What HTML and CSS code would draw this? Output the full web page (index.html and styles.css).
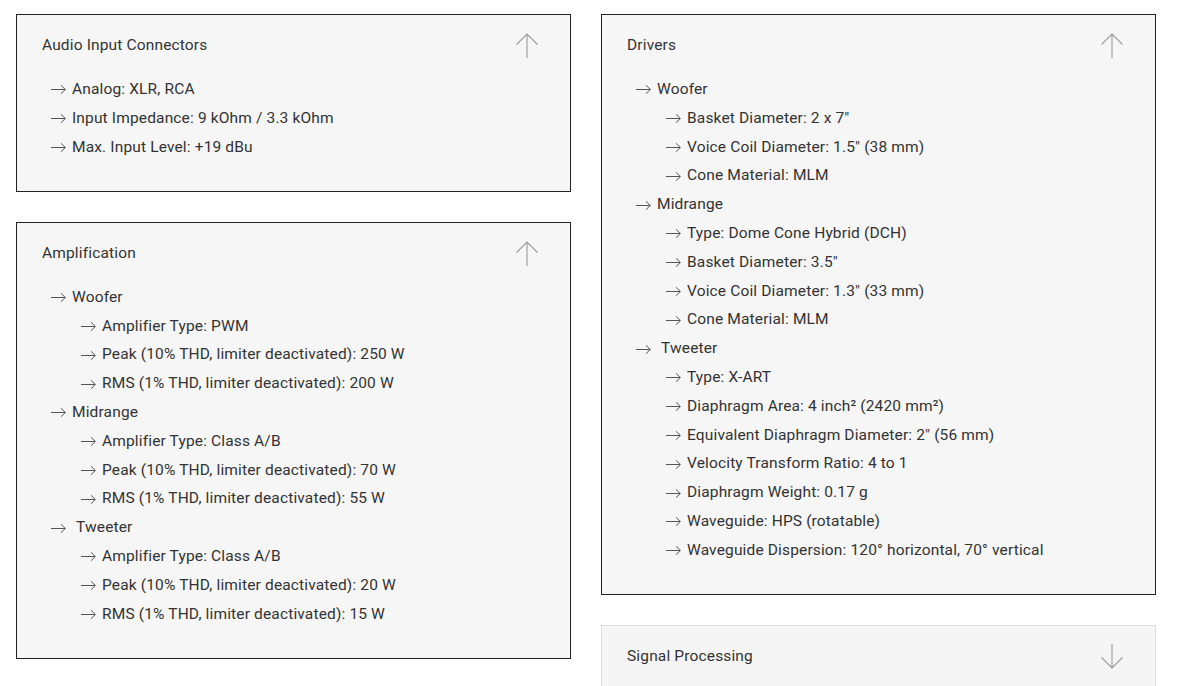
FILE: index.html
```html
<!DOCTYPE html>
<html lang="en">
<head>
<meta charset="utf-8">
<title>Specifications</title>
<link rel="stylesheet" href="styles.css">
</head>
<body>
<div class="grid">
  <div class="col">
    <section class="box open">
      <div class="head">
        <span class="title">Audio Input Connectors</span>
        <svg class="toggle" width="24" height="25" viewBox="0 0 24 25"><path d="M12 1V25M1.5 11.5L12 1L22.5 11.5" fill="none" stroke="#9a9a9a" stroke-width="1.1"/></svg>
      </div>
      <ul class="list">
        <li>Analog: XLR, RCA</li>
        <li>Input Impedance: 9 kOhm / 3.3 kOhm</li>
        <li>Max. Input Level: +19 dBu</li>
      </ul>
    </section>
    <section class="box open">
      <div class="head">
        <span class="title">Amplification</span>
        <svg class="toggle" width="24" height="25" viewBox="0 0 24 25"><path d="M12 1V25M1.5 11.5L12 1L22.5 11.5" fill="none" stroke="#9a9a9a" stroke-width="1.1"/></svg>
      </div>
      <ul class="list">
        <li>Woofer
          <ul>
            <li>Amplifier Type: PWM</li>
            <li>Peak (10% THD, limiter deactivated): 250 W</li>
            <li>RMS (1% THD, limiter deactivated): 200 W</li>
          </ul>
        </li>
        <li>Midrange
          <ul>
            <li>Amplifier Type: Class A/B</li>
            <li>Peak (10% THD, limiter deactivated): 70 W</li>
            <li>RMS (1% THD, limiter deactivated): 55 W</li>
          </ul>
        </li>
        <li>&nbsp;Tweeter
          <ul>
            <li>Amplifier Type: Class A/B</li>
            <li>Peak (10% THD, limiter deactivated): 20 W</li>
            <li>RMS (1% THD, limiter deactivated): 15 W</li>
          </ul>
        </li>
      </ul>
    </section>
  </div>
  <div class="col">
    <section class="box open">
      <div class="head">
        <span class="title">Drivers</span>
        <svg class="toggle" width="24" height="25" viewBox="0 0 24 25"><path d="M12 1V25M1.5 11.5L12 1L22.5 11.5" fill="none" stroke="#9a9a9a" stroke-width="1.1"/></svg>
      </div>
      <ul class="list">
        <li>Woofer
          <ul>
            <li>Basket Diameter: 2 x 7″</li>
            <li>Voice Coil Diameter: 1.5″ (38 mm)</li>
            <li>Cone Material: MLM</li>
          </ul>
        </li>
        <li>Midrange
          <ul>
            <li>Type: Dome Cone Hybrid (DCH)</li>
            <li>Basket Diameter: 3.5″</li>
            <li>Voice Coil Diameter: 1.3″ (33 mm)</li>
            <li>Cone Material: MLM</li>
          </ul>
        </li>
        <li>&nbsp;Tweeter
          <ul>
            <li>Type: X-ART</li>
            <li>Diaphragm Area: 4 inch² (2420 mm²)</li>
            <li>Equivalent Diaphragm Diameter: 2″ (56 mm)</li>
            <li>Velocity Transform Ratio: 4 to 1</li>
            <li>Diaphragm Weight: 0.17 g</li>
            <li>Waveguide: HPS (rotatable)</li>
            <li>Waveguide Dispersion: 120° horizontal, 70° vertical</li>
          </ul>
        </li>
      </ul>
    </section>
    <section class="box closed">
      <div class="head">
        <span class="title">Signal Processing</span>
        <svg class="toggle" width="24" height="25" viewBox="0 0 24 25"><path d="M12 0V24M1.5 13.5L12 24L22.5 13.5" fill="none" stroke="#9a9a9a" stroke-width="1.1"/></svg>
      </div>
    </section>
  </div>
</div>
</body>
</html>
```
FILE: styles.css
```css
html, body {
  margin: 0;
  padding: 0;
  background: #ffffff;
}
body {
  font-family: Roboto, "Liberation Sans", sans-serif;
  font-size: 15.5px;
  letter-spacing: 0.15px;
  color: #333333;
  overflow: hidden;
}
.grid {
  display: grid;
  grid-template-columns: 555px 555px;
  column-gap: 30px;
  padding: 14px 16px 0;
  align-items: start;
}
.col {
  display: flex;
  flex-direction: column;
  gap: 30px;
}
.box {
  background: #f6f6f6;
  border: 1px solid #222222;
  padding: 16px 25px 29.5px;
}
.box.closed {
  border-color: #dddddd;
  background: #f5f5f5;
  padding-bottom: 40px;
}
.head {
  display: flex;
  justify-content: space-between;
  align-items: center;
  height: 29px;
  line-height: 29px;
}
.toggle {
  display: block;
  margin-right: 6px;
  margin-top: 0;
}
.list {
  list-style: none;
  margin: 15px 0 0;
  padding: 0 0 0 9px;
  line-height: 28.8px;
}
.list ul {
  list-style: none;
  margin: 0;
  padding: 0 0 0 30px;
}
.list li::before {
  content: "";
  display: inline-block;
  width: 15px;
  height: 9px;
  margin-right: 6px;
  vertical-align: middle;
  background: url("data:image/svg+xml;utf8,<svg xmlns='http://www.w3.org/2000/svg' width='15' height='9' viewBox='0 0 15 9'><path d='M0 4.5H14.3M10 0.3L14.3 4.5L10 8.7' fill='none' stroke='%23555' stroke-width='1'/></svg>") no-repeat;
}
```
